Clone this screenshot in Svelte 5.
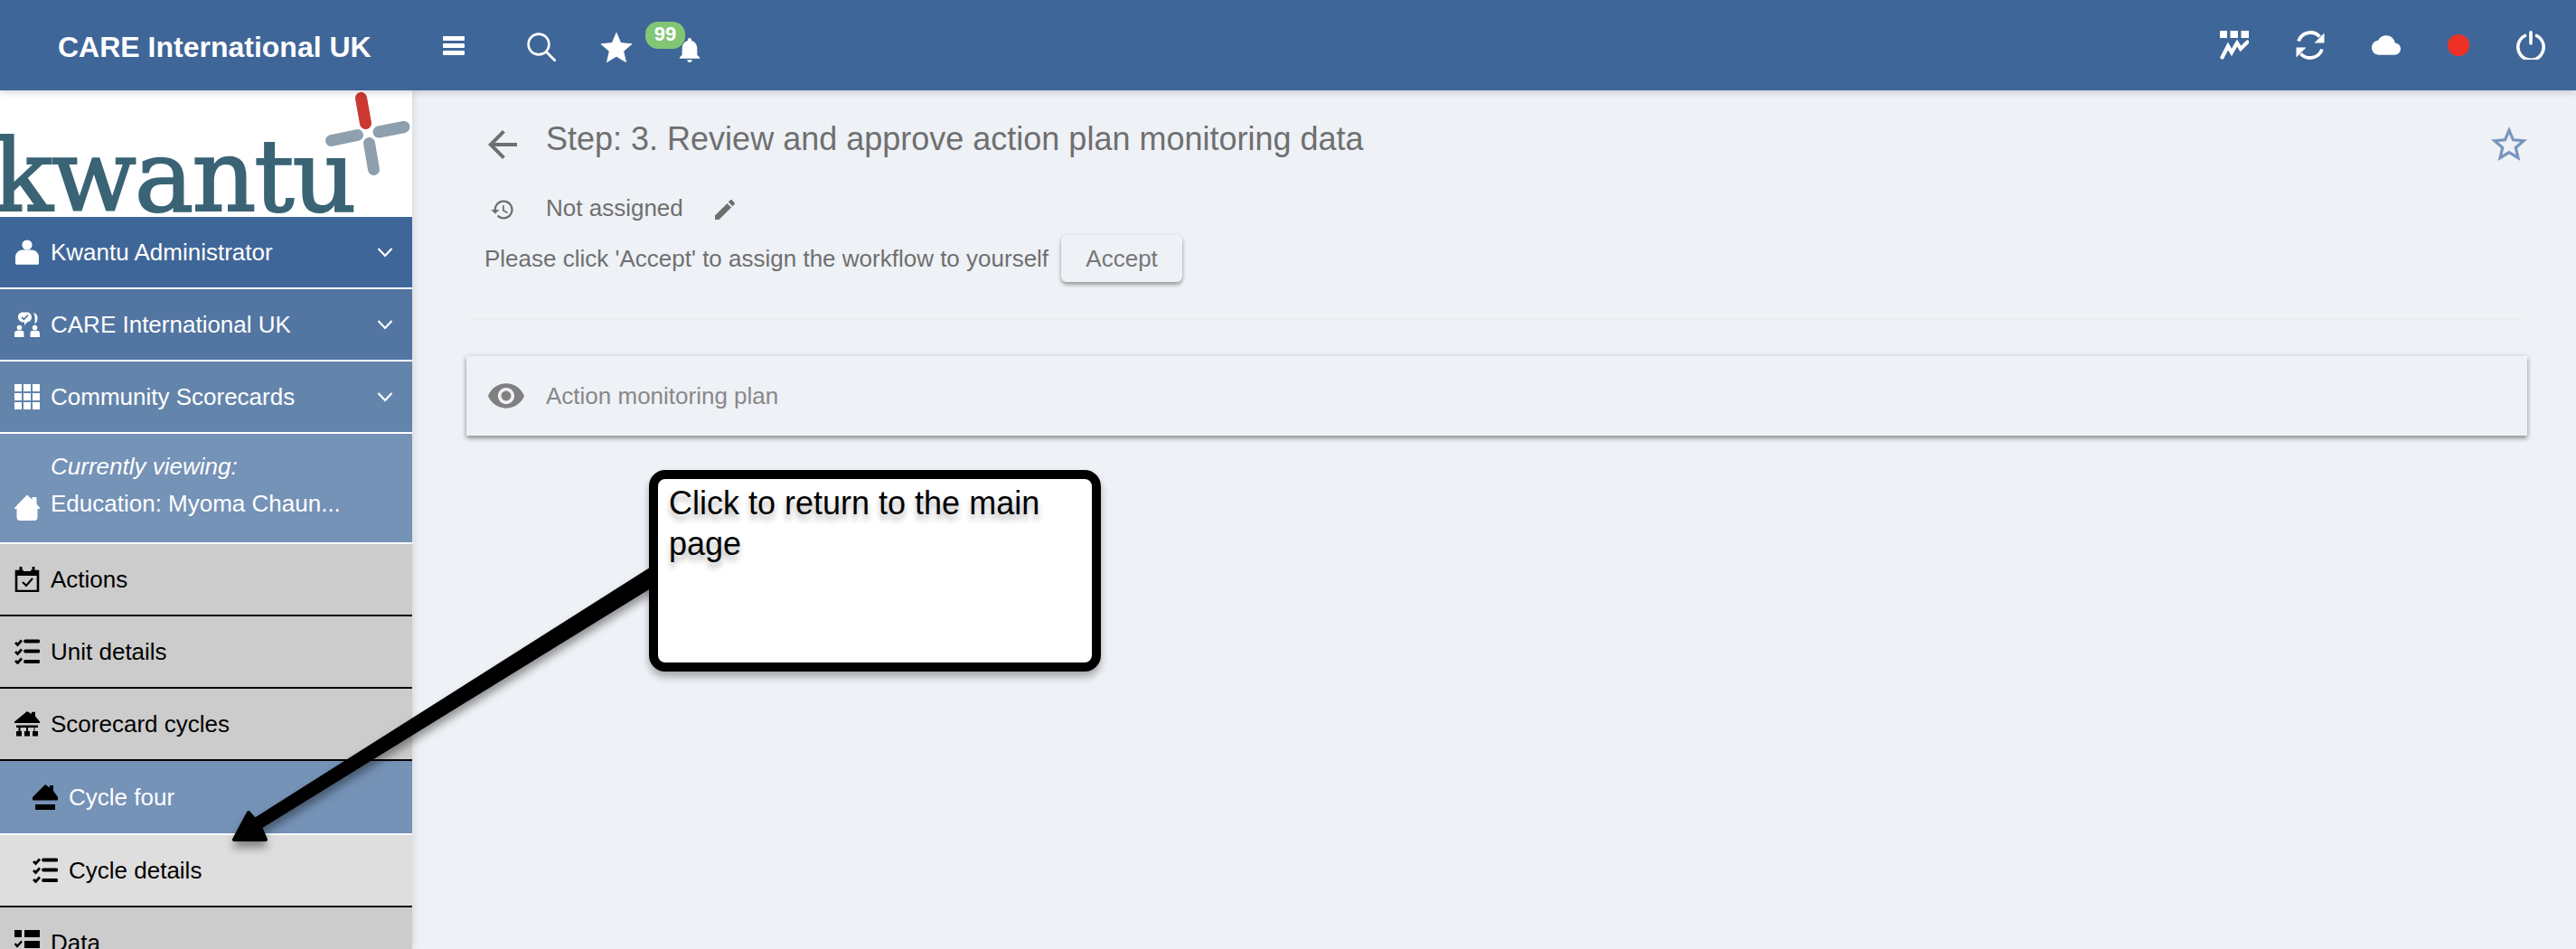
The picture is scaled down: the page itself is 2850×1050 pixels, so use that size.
<script>
  const icons = {
    person: '<circle cx="14" cy="6" r="5.6"/><path d="M1 26V19.500C1 15 5 11.500 9 11.500H19C23 11.500 27 15 27 19.500V26C27 27 26.300 27.800 25.300 27.800H2.700C1.700 27.800 1 27 1 26Z"/>',
    care: '<path d="M4 5.500C4 2.500 6.500 .5 9.500 .5H14C17 .5 19 3 19 6C19 9 17 11 14 11.500L11 15L11 11.500H9.500C6.500 11.500 4 9 4 5.500Z"/><path d="M21 1C24 1.500 25.500 4 25.500 7C25.500 9.500 24.500 12 22.500 13.500C22.500 11 23 8 22.500 5.500C22.300 4 21.800 2.500 21 1Z"/><circle cx="5.500" cy="17.500" r="2.800"/><circle cx="22.500" cy="17.500" r="2.800"/><path d="M0 28V24C0 22 1.500 20.800 3 20.800H8C9.500 20.800 10.500 22 10.500 24V28Z"/><path d="M17.500 28V24C17.500 22 18.500 20.800 20 20.800H25C26.500 20.800 28 22 28 24V28Z"/><path d="M8 6L10.500 8.300L15 3.500" fill="none" stroke="#5275a2" stroke-width="1.800"/>',
    grid: '<path d="M0 0h8v8H0zM10 0h8v8h-8zM20 0h8v8h-8zM0 10h8v8H0zM10 10h8v8h-8zM20 10h8v8h-8zM0 20h8v8H0zM10 20h8v8h-8zM20 20h8v8h-8z"/>',
    home: '<path d="M14 0L20 5.500V2.500H24V9.500L28 14.500H25V24.500C25 26.500 23.500 28 21.500 28H6.500C4.500 28 3 26.500 3 24.500V14.500H0Z" stroke="currentColor" stroke-linejoin="round"/>',
    calendar: '<path d="M2 5H26V27H2Z" fill="none" stroke="currentColor" stroke-width="2.600"/><path d="M1 4H27V10H1Z"/><path d="M7 1V6M21 1V6" stroke="currentColor" stroke-width="3" stroke-linecap="round"/><path d="M9 17L13 21L20 13" fill="none" stroke="currentColor" stroke-width="2.200"/><path d="M10 2H18V5H10Z" fill="#ccc"/>',
    list: '<path d="M1 4L3.500 6.500L8 1.500M1 14L3.500 16.500L8 11.500M1 24L3.500 26.500L8 21.500" fill="none" stroke="currentColor" stroke-width="2.800"/><path d="M12 2.500H26.500M12 13.500H26.500M12 25H26.500" stroke="currentColor" stroke-width="3.800" stroke-linecap="round"/>',
    org: '<path d="M14 0L19 3V.8H23V5.500L28 11.500V13H0V11.500Z"/><path d="M2 15.500H26V18H22.500V22H26V27.500H20V22H21.500V18H15V22H17V27.500H11V22H13V18H6.500V22H8V27.500H2V22H4.500V18H2Z"/>',
    roofbar: '<path d="M14 0L19 3.500V1H23V7L28 14V16.500C28 17 27.500 17.500 27 17.500H1C.5 17.500 0 17 0 16.500V14Z"/><path d="M3 22H25V28H3Z"/>',
    data: '<path d="M0 0H8V8H0ZM11 0H28V8H11ZM11 12H28V20H11ZM11 23H28V28H11Z"/><path d="M.5 15L3 18L8 12.500" fill="none" stroke="currentColor" stroke-width="2.400"/>'
  };

  const rows = [
    { label: 'Kwantu Administrator', icon: 'person', tone: 't1', more: true },
    { label: 'CARE International UK', icon: 'care', tone: 't2', more: true },
    { label: 'Community Scorecards', icon: 'grid', tone: 't3', more: true },
    { label: 'Education: Myoma Chaun...', icon: 'home', tone: 't4 tall', note: 'Currently viewing:' },
    { label: 'Actions', icon: 'calendar', tone: 'grey' },
    { label: 'Unit details', icon: 'list', tone: 'grey' },
    { label: 'Scorecard cycles', icon: 'org', tone: 'grey' },
    { label: 'Cycle four', icon: 'roofbar', tone: 't4 sub dark-icon open' },
    { label: 'Cycle details', icon: 'list', tone: 'pale sub' },
    { label: 'Data', icon: 'data', tone: 'grey' }
  ];
</script>

<div class="page">
  <header class="topbar">
    <span class="brand">CARE International UK</span>
    <div class="tools">
      <svg class="burger" viewBox="0 0 24 21" aria-hidden="true"><path d="M1 0H23A1 1 0 0 1 24 1V4A1 1 0 0 1 23 5H1A1 1 0 0 1 0 4V1A1 1 0 0 1 1 0ZM1 8H23A1 1 0 0 1 24 9V12A1 1 0 0 1 23 13H1A1 1 0 0 1 0 12V9A1 1 0 0 1 1 8ZM1 16H23A1 1 0 0 1 24 17V20A1 1 0 0 1 23 21H1A1 1 0 0 1 0 20V17A1 1 0 0 1 1 16Z"/></svg>
      <svg class="search" viewBox="0 0 32 32" aria-hidden="true"><circle cx="13" cy="13" r="11.400" fill="none" stroke="currentColor" stroke-width="2.600"/><path d="M21.500 21.500L31 31" stroke="currentColor" stroke-width="2.800" stroke-linecap="round"/></svg>
      <svg class="star" viewBox="2 2 20 19" aria-hidden="true"><path d="M12 17.270L18.180 21l-1.640-7.030L22 9.240l-7.190-.61L12 2 9.190 8.630 2 9.240l5.460 4.730L5.820 21z" stroke="currentColor" stroke-width=".5" stroke-linejoin="round"/></svg>
      <div class="alerts">
        <svg class="bell" viewBox="4 2.500 16 19.500" aria-hidden="true"><path d="M12 22c1.100 0 2-.9 2-2h-4c0 1.100.89 2 2 2zm6-6v-5c0-3.070-1.640-5.640-4.500-6.320V4c0-.83-.67-1.500-1.500-1.500s-1.500.67-1.500 1.500v.68C7.630 5.360 6 7.920 6 11v5l-2 2v1h16v-1l-2-2z"/></svg>
        <span class="badge">99</span>
      </div>
    </div>
    <div class="status">
      <svg viewBox="0 0 32 32" aria-hidden="true"><path d="M0 0H8V8H0ZM11.500 0H20V8H11.500ZM23.500 0H32V8H23.500Z"/><path d="M2.500 29.500L9 17L13 24L19 13.500L23 20L30.500 12.500" fill="none" stroke="currentColor" stroke-width="4.200" stroke-linecap="round"/></svg>
      <svg viewBox="0 0 32 32" aria-hidden="true"><path d="M3 11.500A14 14 0 0 1 26.500 6.500M29 20.500A14 14 0 0 1 5.500 25.500" fill="none" stroke="currentColor" stroke-width="3.800"/><path d="M31.500 2.500V13.500H20.500ZM.5 29.500V18.500H11.500Z"/></svg>
      <svg viewBox="0 0 24 24" aria-hidden="true"><path d="M19.350 10.040C18.670 6.590 15.640 4 12 4 9.110 4 6.600 5.640 5.350 8.040 2.340 8.360 0 10.910 0 14c0 3.310 2.690 6 6 6h13c2.760 0 5-2.240 5-5 0-2.640-2.050-4.780-4.650-4.960z"/></svg>
      <span class="dot"></span>
      <svg viewBox="0 0 32 32" aria-hidden="true"><path d="M9.500 5.500A14.200 14.200 0 1 0 22.500 5.500" fill="none" stroke="currentColor" stroke-width="3.600" stroke-linecap="round"/><path d="M16 1.800V14" stroke="currentColor" stroke-width="3.600" stroke-linecap="round"/></svg>
    </div>
  </header>

  <div class="body">
    <nav class="side">
      <div class="logo">
        <span class="word">kwantu</span>
        <svg class="mark" viewBox="0 0 456 140" aria-hidden="true">
          <path d="M399.500 8.500L404.500 36.500" stroke="#cb3832" stroke-width="13" stroke-linecap="round"/>
          <path d="M419 46L447 40.500M366.500 55.500L395.500 49.500M408.500 58.500L413.500 87.500" stroke="#8e9fad" stroke-width="13" stroke-linecap="round"/>
        </svg>
      </div>
      {#each rows as row}
        <div class="row {row.tone}">
          <svg class="ico" viewBox="0 0 28 28" aria-hidden="true">{@html icons[row.icon]}</svg>
          <div class="label">
            {#if row.note}<em>{row.note}</em>{/if}
            <span>{row.label}</span>
          </div>
          {#if row.more}
            <svg class="chev" viewBox="0 0 18 12" aria-hidden="true"><path d="M1.500 2L9 10L16.500 2" fill="none" stroke="currentColor" stroke-width="2.200"/></svg>
          {/if}
        </div>
      {/each}
    </nav>

    <main class="main">
      <div class="title-row">
        <svg class="back" viewBox="0 0 24 24" aria-hidden="true"><path d="M20 11H7.830l5.590-5.590L12 4l-8 8 8 8 1.410-1.410L7.830 13H20v-2z"/></svg>
        <h1>Step: 3. Review and approve action plan monitoring data</h1>
        <svg class="fav" viewBox="0 0 24 24" aria-hidden="true"><path d="M22 9.240l-7.190-.62L12 2 9.190 8.630 2 9.240l5.460 4.730L5.820 21 12 17.270 18.180 21l-1.630-7.030L22 9.240zM12 15.400l-3.760 2.270 1-4.280-3.320-2.880 4.380-.38L12 6.100l1.710 4.040 4.380.38-3.320 2.880 1 4.280L12 15.400z"/></svg>
      </div>
      <div class="assign">
        <svg class="hist" viewBox="0 0 24 24" aria-hidden="true"><path d="M13 3c-4.970 0-9 4.030-9 9H1l3.890 3.890.07.14L9 12H6c0-3.870 3.130-7 7-7s7 3.130 7 7-3.130 7-7 7c-1.930 0-3.680-.79-4.940-2.060l-1.420 1.420C8.270 19.990 10.510 21 13 21c4.970 0 9-4.030 9-9s-4.030-9-9-9zm-1 5v5l4.280 2.540.72-1.210-3.500-2.080V8H12z"/></svg>
        <span>Not assigned</span>
        <svg class="pen" viewBox="3 3 18 18" aria-hidden="true"><path d="M3 17.250V21h3.750L17.810 9.940l-3.750-3.750L3 17.250zM20.710 7.040c.39-.39.39-1.020 0-1.410l-2.340-2.340c-.39-.39-1.020-.39-1.410 0l-1.830 1.830 3.750 3.750 1.830-1.830z"/></svg>
      </div>
      <div class="accept-row">
        <span>Please click 'Accept' to assign the workflow to yourself</span>
        <button type="button">Accept</button>
      </div>
      <hr />
      <section class="card">
        <svg class="eye" viewBox="1 4.500 22 15" aria-hidden="true"><path d="M12 4.500C7 4.500 2.730 7.610 1 12c1.730 4.390 6 7.500 11 7.500s9.270-3.110 11-7.500c-1.730-4.390-6-7.500-11-7.500zM12 17c-2.760 0-5-2.240-5-5s2.240-5 5-5 5 2.240 5 5-2.240 5-5 5zm0-8c-1.660 0-3 1.340-3 3s1.340 3 3 3 3-1.340 3-3-1.340-3-3-3z"/></svg>
        <span>Action monitoring plan</span>
      </section>
    </main>
  </div>

  <svg class="arrow" width="2850" height="1050" viewBox="0 0 2850 1050" aria-hidden="true">
    <path d="M725 626.500L282 907L275 899L259 929L294 929L288 915L725 645.500Z" stroke="#000" stroke-width="4" stroke-linejoin="round"/>
  </svg>
  <aside class="callout">Click to return to the main page</aside>
</div>

<style>
  :global(body) { margin: 0; }
  .page {
    position: relative;
    width: 2850px;
    height: 1050px;
    overflow: hidden;
    display: flex;
    flex-direction: column;
    background: #eef1f6;
    font-family: "Liberation Sans", Arial, sans-serif;
  }
  svg { display: block; flex: none; fill: currentColor; }

  .topbar {
    flex: none;
    height: 100px;
    display: flex;
    align-items: center;
    background: #3f6698;
    color: #fff;
    box-shadow: 0 2px 8px rgba(0, 0, 0, .18);
    position: relative;
    z-index: 2;
  }
  .brand { margin-left: 64px; width: 426px; font-size: 32px; font-weight: 700; white-space: nowrap; margin-top: 4px; }
  .tools { display: flex; align-items: center; }
  .burger { width: 24px; height: 21px; margin-top: 1px; }
  .search { width: 32px; height: 32px; margin-left: 69px; margin-top: 4px; }
  .star { width: 34px; height: 33px; margin-left: 50px; margin-top: 4px; }
  .alerts { position: relative; width: 26px; height: 27px; margin-left: 51px; margin-top: 10px; }
  .bell { width: 26px; height: 27px; }
  .badge {
    position: absolute;
    left: -36px;
    top: -18px;
    width: 44px;
    height: 30px;
    border-radius: 14px;
    background: #82c675;
    font-size: 22px;
    font-weight: 700;
    line-height: 28px;
    text-align: center;
  }
  .status { margin-left: auto; margin-right: 34px; display: flex; align-items: center; gap: 52px; }
  .status svg { width: 32px; height: 32px; }
  .dot { width: 24px; height: 24px; border-radius: 50%; background: #ee3124; }

  .body { flex: 1; display: flex; min-height: 0; }
  .side {
    flex: none;
    width: 456px;
    box-shadow: 2px 0 8px rgba(0, 0, 0, .1);
    position: relative;
    z-index: 1;
  }
  .logo { position: relative; height: 140px; background: #fff; overflow: hidden; }
  .word {
    position: absolute;
    left: -8px;
    bottom: -20px;
    font-family: "DejaVu Serif", serif;
    font-size: 110px;
    line-height: 130px;
    color: #3a6475;
    -webkit-text-stroke: 2px #3a6475;
    letter-spacing: -2px;
  }
  .mark { position: absolute; left: 0; top: 0; width: 456px; height: 140px; }

  .row {
    box-sizing: border-box;
    height: 80px;
    display: flex;
    align-items: center;
    gap: 12px;
    padding: 0 21px 0 16px;
    font-size: 26px;
    border-bottom: 2px solid #fff;
    color: #fff;
  }
  .ico { width: 28px; height: 28px; }
  .label { display: flex; flex-direction: column; gap: 10px; white-space: nowrap; }
  .label em { font-style: italic; }
  .chev { width: 18px; height: 12px; margin-left: auto; }
  .t1 { background: #3f6698; }
  .t2 { background: #5275a2; }
  .t3 { background: #6485ab; }
  .t4 { background: #7592b7; }
  .tall { height: 122px; padding-bottom: 2px; align-items: flex-end; }
  .tall .label { padding-bottom: 25px; }
  .tall .ico { margin-bottom: 22px; }
  .grey { background: #ccc; color: #000; border-bottom-color: #000; }
  .pale { background: #dedede; color: #000; border-bottom-color: #000; }
  .sub { padding-left: 36px; }
  .open { height: 82px; }
  .dark-icon .ico { color: #000; }

  .main { flex: 1; min-width: 0; padding: 36px 54px 0 60px; color: #6f6f6f; }
  .title-row { display: flex; padding-left: 16px; height: 48px; gap: 24px; }
  .back { width: 48px; height: 48px; }
  h1 { margin: 0; font-size: 36px; font-weight: 400; line-height: 36px; white-space: nowrap; }
  .fav { width: 48px; height: 48px; margin-left: auto; margin-right: -4px; color: #7896bc; }
  .assign { display: flex; align-items: center; height: 40px; margin-top: 26px; padding-left: 26px; font-size: 26px; }
  .hist { width: 28px; height: 28px; margin-top: 4px; margin-right: 34px; }
  .pen { width: 22px; height: 22px; margin-left: 35px; margin-top: 4px; }
  .accept-row { display: flex; align-items: center; margin-top: 10px; padding-left: 20px; font-size: 26px; white-space: nowrap; }
  button {
    width: 134px;
    height: 52px;
    margin-left: 14px;
    border: 0;
    border-radius: 6px;
    background: #eef1f6;
    color: #777;
    font: inherit;
    box-shadow: 0 3px 4px rgba(0, 0, 0, .35), 0 0 4px rgba(0, 0, 0, .06);
  }
  hr { margin: 41px 4px 0; border: 0; border-top: 1px solid #ebebeb; }
  .card {
    height: 88px;
    margin-top: 40px;
    box-sizing: border-box;
    display: flex;
    align-items: center;
    padding-left: 24px;
    gap: 24px;
    font-size: 26px;
    color: #888;
    background: #eef1f6;
    box-shadow: 0 3px 5px rgba(0, 0, 0, .38), 0 0 6px rgba(0, 0, 0, .1);
  }
  .eye { width: 40px; height: 28px; color: #808080; }

  .arrow { position: absolute; left: 0; top: 0; z-index: 3; filter: drop-shadow(0 7px 5px rgba(0, 0, 0, .4)); }
  .callout {
    position: absolute;
    z-index: 4;
    left: 718px;
    top: 520px;
    width: 500px;
    height: 223px;
    box-sizing: border-box;
    padding: 4px 50px 0 12px;
    border: 10px solid #000;
    border-radius: 18px;
    background: #fff;
    color: #000;
    font-size: 36px;
    line-height: 45px;
    text-shadow: 0 6px 6px rgba(0, 0, 0, .3);
    box-shadow: 0 6px 8px rgba(0, 0, 0, .3);
  }
</style>
